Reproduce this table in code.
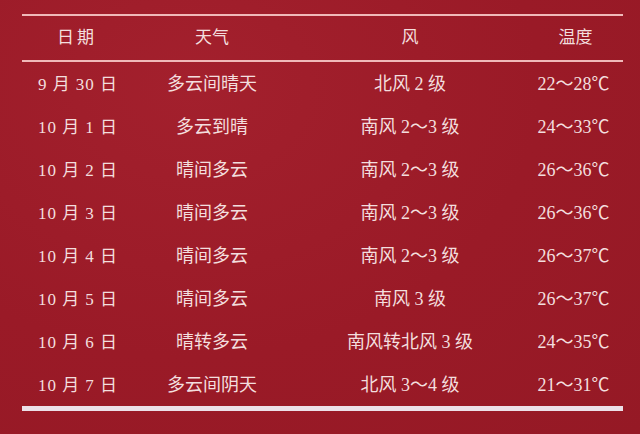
const rows = [
  ["9 月 30 日", "多云间晴天", "北风 2 级", "22～28℃"],
  ["10 月 1 日", "多云到晴", "南风 2～3 级", "24～33℃"],
  ["10 月 2 日", "晴间多云", "南风 2～3 级", "26～36℃"],
  ["10 月 3 日", "晴间多云", "南风 2～3 级", "26～36℃"],
  ["10 月 4 日", "晴间多云", "南风 2～3 级", "26～37℃"],
  ["10 月 5 日", "晴间多云", "南风 3 级", "26～37℃"],
  ["10 月 6 日", "晴转多云", "南风转北风 3 级", "24～35℃"],
  ["10 月 7 日", "多云间阴天", "北风 3～4 级", "21～31℃"],
];

const cols = "grid grid-cols-[110px_160px_236px_95px]";
const font = { fontFamily: '"Liberation Serif", "Noto Sans CJK SC", serif' };

export default function App() {
  return (
    <div
      className="w-[640px] h-[434px] overflow-hidden bg-[#9c1b28] bg-[radial-gradient(ellipse_at_30%_20%,#a3202d_0%,#9a1a27_55%,#951925_100%)] text-[#f3dede]"
      style={font}
    >
      <div className="pl-[22px] pr-[17px] pt-[14px]">
        <div className="h-[2px] bg-[#f0b9b9]" />
        <div className={`${cols} h-[44px] items-center text-[17px] text-center`}>
          <div className="tracking-[3px]">日期</div>
          <div>天气</div>
          <div>风</div>
          <div>温度</div>
        </div>
        <div className="h-[2px] bg-[#f0b9b9]" />
        <div className="pt-[1px]">
          {rows.map((r, i) => (
            <div key={i} className={`${cols} h-[43px] items-center text-center text-[18px]`}>
              <div className="tracking-[1px] text-[17px] pl-[2px]">{r[0]}</div>
              <div>{r[1]}</div>
              <div>{r[2]}</div>
              <div className="pr-[4px]">{r[3]}</div>
            </div>
          ))}
        </div>
        <div className="-mt-[1px] h-[5px] bg-[#ece0e8]" />
      </div>
    </div>
  );
}
